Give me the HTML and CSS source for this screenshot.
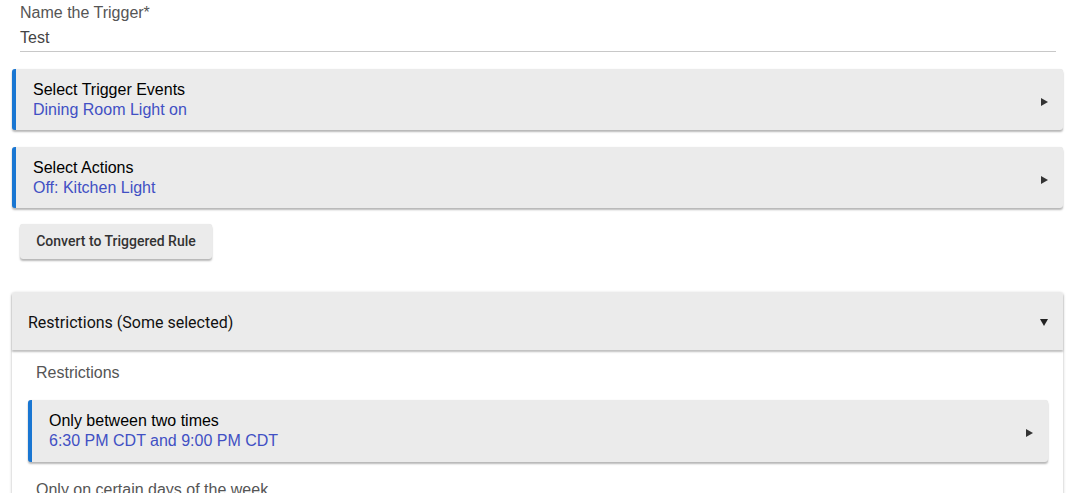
FILE: index.html
```html
<!DOCTYPE html>
<html>
<head>
<meta charset="utf-8">
<link rel="stylesheet" href="styles.css">
</head>
<body>
<div class="page">
  <div class="field">
    <div class="field-label">Name the Trigger*</div>
    <div class="field-value">Test</div>
  </div>

  <div class="card">
    <div class="card-text">
      <div class="card-title">Select Trigger Events</div>
      <div class="card-sub">Dining Room Light on</div>
    </div>
    <span class="arrow-right"></span>
  </div>

  <div class="card">
    <div class="card-text">
      <div class="card-title">Select Actions</div>
      <div class="card-sub">Off: Kitchen Light</div>
    </div>
    <span class="arrow-right"></span>
  </div>

  <div class="btn-row">
    <button class="btn">Convert to Triggered Rule</button>
  </div>

  <div class="panel">
    <div class="panel-head">
      <span class="panel-title">Restrictions (Some selected)</span>
      <span class="arrow-down"></span>
    </div>
    <div class="panel-body">
      <div class="section-label">Restrictions</div>
      <div class="card inner">
        <div class="card-text">
          <div class="card-title">Only between two times</div>
          <div class="card-sub">6:30 PM CDT and 9:00 PM CDT</div>
        </div>
        <span class="arrow-right"></span>
      </div>
      <div class="section-label next">Only on certain days of the week</div>
    </div>
  </div>
</div>
</body>
</html>
```

FILE: styles.css
```css
html, body {
  margin: 0;
  padding: 0;
  background: #fff;
  overflow: hidden;
}
body {
  font-family: "Liberation Sans", Arial, sans-serif;
  font-size: 16px;
  color: #000;
}
.page {
  padding: 2px 13px 0 12px;
}
.field {
  margin: 0 7px 0 8px;
  border-bottom: 1px solid #c8c8c8;
  padding-bottom: 2px;
}
.field-label {
  color: #555;
  line-height: 22px;
}
.field-value {
  color: #444;
  line-height: 22px;
  margin-top: 3px;
}
.card {
  display: flex;
  align-items: center;
  justify-content: space-between;
  background: #ebebeb;
  border-left: 4px solid #1976d2;
  border-radius: 3px;
  box-shadow: 0 2px 2px rgba(0,0,0,0.28), 0 0 1px rgba(0,0,0,0.12);
  height: 61px;
  margin-top: 17px;
  padding: 0 15px 0 17px;
  box-sizing: border-box;
}
.card-title {
  line-height: 20px;
  color: #000;
}
.card-sub {
  line-height: 20px;
  color: #4150c4;
}
.arrow-right {
  width: 0;
  height: 0;
  margin-top: 4px;
  border-top: 4px solid transparent;
  border-bottom: 4px solid transparent;
  border-left: 7px solid #333;
}
.btn-row {
  margin-top: 16px;
  padding-left: 8px;
}
.btn {
  font-family: Roboto, "Liberation Sans", sans-serif;
  font-weight: 500;
  font-size: 14px;
  color: #333;
  background: #ebebeb;
  border: none;
  border-radius: 3px;
  box-shadow: 0 2px 2px rgba(0,0,0,0.28), 0 0 1px rgba(0,0,0,0.12);
  height: 35px;
  width: 192px;
  padding: 0 0 2px;
}
.panel {
  margin-top: 33px;
  box-shadow: 0 1px 3px rgba(0,0,0,0.3);
  border-radius: 3px;
}
.panel-head {
  display: flex;
  align-items: center;
  justify-content: space-between;
  background: #ebebeb;
  height: 58px;
  padding: 3px 15px 0 16px;
  box-sizing: border-box;
  box-shadow: 0 2px 2px rgba(0,0,0,0.25);
  border-radius: 3px 3px 0 0;
  position: relative;
}
.panel-title {
  font-family: Roboto, "Liberation Sans", sans-serif;
  font-size: 16px;
  color: #111;
}
.arrow-down {
  width: 0;
  height: 0;
  border-left: 4px solid transparent;
  border-right: 4px solid transparent;
  border-top: 7px solid #222;
}
.panel-body {
  padding: 13px 15px 0 16px;
  height: 200px;
}
.section-label {
  color: #555;
  line-height: 20px;
  padding-left: 8px;
}
.card.inner {
  margin-top: 17px;
  height: 62px;
}
.section-label.next {
  margin-top: 18px;
}
```
